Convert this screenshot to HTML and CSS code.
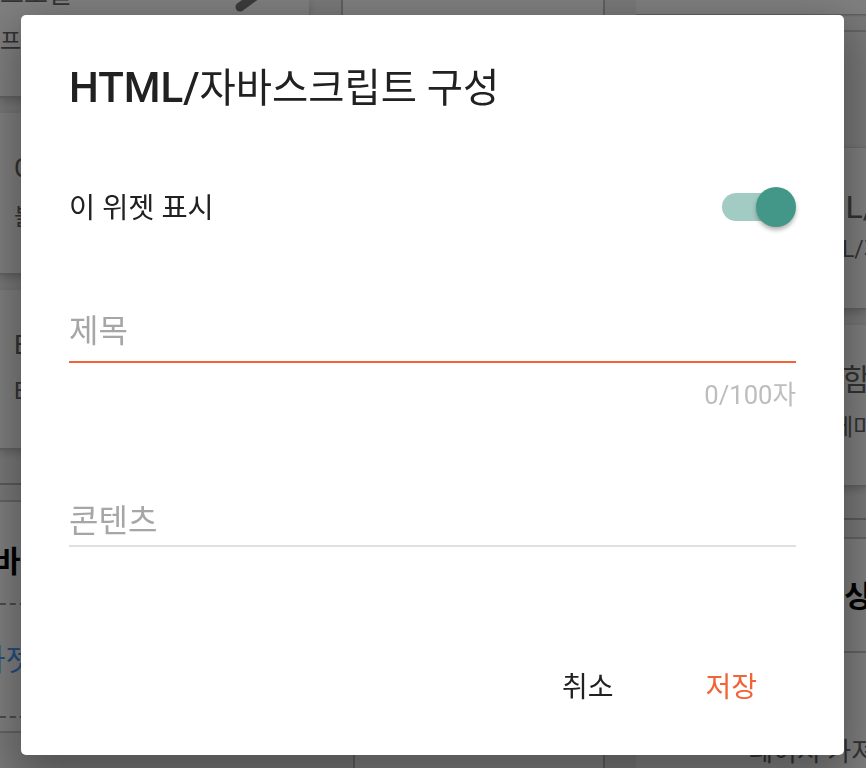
FILE: index.html
```html
<!DOCTYPE html>
<html lang="ko">
<head>
    <meta charset="UTF-8">
    <meta name="viewport" content="width=device-width, initial-scale=1.0">
    <title>HTML/자바스크립트 구성</title>
    <link rel="stylesheet" href="styles.css">
</head>
<body>

    <!-- 뒤쪽 레이아웃 화면 -->
    <div class="page">
        <div class="column column-left">
            <div class="card card-profile">
                <div class="card-top">
                    <span class="card-name">프로필</span>
                    <svg class="pencil" width="26" height="14" viewBox="0 0 26 14"><path d="M6 7 L24 -6" stroke="#777" stroke-width="9" stroke-linecap="round"/></svg>
                </div>
                <div class="card-sub">프로필</div>
            </div>
            <div class="card card-b">
                <div class="card-name">Chrome</div>
                <div class="card-sub">블로그</div>
            </div>
            <div class="card card-c">
                <div class="card-name">Embed</div>
                <div class="card-sub">Embed</div>
            </div>
            <div class="strip"></div>
            <div class="section">
                <div class="section-head">바닥글</div>
                <div class="section-link">가젯 추가</div>
            </div>
        </div>
        <div class="column column-mid">
            <div class="mid-top"></div>
            <div class="mid-bottom"></div>
        </div>
        <div class="column column-right">
            <div class="right-top"></div>
            <div class="card right-a">
                <div class="card-name">HTML/자바</div>
                <div class="card-sub">HTML/자바</div>
            </div>
            <div class="card right-b">
                <div class="card-name">포함</div>
                <div class="card-sub">테마</div>
            </div>
            <div class="strip"></div>
            <div class="section right-section">
                <div class="section-head">싱글</div>
            </div>
            <div class="right-bottom">페이지 가져오기</div>
        </div>
    </div>

    <!-- 구성 대화상자 -->
    <div class="overlay">
        <div class="dialog">
            <h2 class="dialog-title"><span class="title-latin">HTML/</span>자바스크립트 구성</h2>

            <div class="toggle-row">
                <span class="toggle-label">이 위젯 표시</span>
                <span class="switch"><span class="switch-knob"></span></span>
            </div>

            <div class="field field-active">
                <label class="field-label">제목</label>
            </div>
            <div class="counter">0/100자</div>

            <div class="field field-content">
                <label class="field-label">콘텐츠</label>
            </div>

            <div class="actions">
                <button class="btn">취소</button>
                <button class="btn btn-save">저장</button>
            </div>
        </div>
    </div>

</body>
</html>
```

FILE: styles.css
```css
* {
    box-sizing: border-box;
}

html, body {
    height: 100%;
}

body {
    margin: 0;
    overflow: hidden;
    font-family: Roboto, "Noto Sans CJK KR", sans-serif;
    color: #212121;
    background-color: #f2f2f2;
}

/* 뒤쪽 화면 */
.page {
    display: grid;
    grid-template-columns: 322px 252px 1fr;
    column-gap: 31px;
    height: 768px;
    overflow: hidden;
}

.column {
    min-width: 0;
}

.card {
    display: flow-root;
    background-color: #fff;
    border-bottom: 2px solid #c8c8c8;
    box-shadow: 0 3px 8px rgba(0, 0, 0, 0.18);
}

.card-top {
    display: flex;
    justify-content: space-between;
    align-items: flex-start;
}

.card-name {
    font-size: 26px;
    line-height: 34px;
    white-space: nowrap;
    color: #666;
}

.card-sub {
    font-size: 23px;
    line-height: 28px;
    white-space: nowrap;
    color: #666;
}

.card-profile {
    height: 98px;
    margin-right: 13px;
    padding-right: 49px;
    margin-bottom: 15px;
}

.card-profile .card-top {
    margin-top: -23px;
}

.card-profile .card-sub {
    margin-top: 14px;
}

.pencil {
    margin-top: 23px;
}

.card-b {
    height: 162px;
    padding: 38px 0 0 14px;
    margin-bottom: 15px;
}

.card-b .card-sub {
    margin-top: 19px;
}

.card-c .card-sub {
    margin-top: 16px;
}

.card-c {
    height: 160px;
    padding: 38px 0 0 14px;
}

.strip {
    height: 17px;
    margin-top: 33px;
    border-top: 2px solid #b8b8b8;
}

.section {
    height: 233px;
    background-color: #fff;
    border-top: 2px solid #c8c8c8;
    border-bottom: 2px solid #c8c8c8;
    padding-top: 42px;
}

.section-head {
    font-size: 30px;
    line-height: 36px;
    font-weight: 700;
    margin-left: -7px;
    color: #000;
    white-space: nowrap;
}

.section-link {
    margin-top: 23px;
    padding: 37px 0 38px;
    font-size: 30px;
    line-height: 36px;
    text-indent: -22px;
    color: #4a9ffa;
    white-space: nowrap;
    border-top: 2px dashed #999;
    border-bottom: 2px dashed #999;
}

.mid-top {
    height: 400px;
    margin-left: -12px;
    background-color: #fff;
    border-left: 2px solid #c0c0c0;
    border-right: 2px solid #c0c0c0;
}

.mid-bottom {
    height: 368px;
    background-color: #fff;
    border-left: 2px solid #c0c0c0;
    border-right: 2px solid #c0c0c0;
}

.right-top {
    height: 32px;
    border-bottom: 2px solid #c8c8c8;
    background: linear-gradient(#fff 14px, #b8b8b8 14px, #f2f2f2 17px);
}

.right-a {
    height: 163px;
    margin-top: 115px;
    margin-bottom: 15px;
    border-top: 1px solid #ddd;
    padding: 44px 0 0 140px;
}

.right-a .card-name {
    margin-top: -2px;
    font-size: 32px;
}

.right-a .card-sub {
    margin: 12px 0 0 16px;
}

.right-b {
    height: 162px;
    padding: 38px 0 0 179px;
}

.right-b .card-name {
    font-size: 30px;
}

.right-b .card-sub {
    margin: 17px 0 0 17px;
}

.column-right .strip {
    height: 19px;
    margin-top: 31px;
}

.right-section {
    height: 116px;
    padding-top: 40px;
    padding-left: 208px;
}

.right-section .section-head {
    margin-left: 0;
}

.right-bottom {
    background-color: #fff;
    height: 115px;
    padding: 81px 0 0 113px;
    font-size: 26px;
    line-height: 36px;
    white-space: nowrap;
    color: #666;
}

/* 대화상자 */
.overlay {
    position: fixed;
    top: 0;
    left: 0;
    right: 0;
    bottom: 0;
    padding: 15px 0 0 21px;
    background-color: rgba(0, 0, 0, 0.5);
}

.dialog {
    display: flex;
    flex-direction: column;
    width: 823px;
    height: 740px;
    padding: 49px 48px 47px;
    background-color: #fff;
    border-radius: 5px;
    box-shadow: 0 22px 40px 4px rgba(0, 0, 0, 0.2), 0 10px 50px 10px rgba(0, 0, 0, 0.16);
}

.dialog-title {
    height: 48px;
    margin: 0;
    font-size: 39.4px;
    line-height: 48px;
    font-weight: 400;
    color: #212121;
}

.title-latin {
    font-size: 42px;
    font-weight: 500;
}

.toggle-row {
    display: flex;
    justify-content: space-between;
    align-items: center;
    height: 40px;
    margin-top: 75px;
    font-size: 28.4px;
}

.toggle-label {
    margin-bottom: 4px;
}

.switch {
    position: relative;
    display: block;
    width: 68px;
    height: 28px;
    margin-right: 6px;
    border-radius: 14px;
    background-color: #a2cbc4;
}

.switch-knob {
    position: absolute;
    top: -6px;
    right: -6px;
    width: 40px;
    height: 40px;
    border-radius: 50%;
    background-color: #439788;
    box-shadow: 0 3px 4px rgba(0, 0, 0, 0.3);
}

.field {
    display: flex;
    align-items: center;
}

.field-label {
    font-size: 32px;
    line-height: 44px;
    color: #a6a6a6;
}

.field-active {
    margin-top: 82px;
    padding-bottom: 8px;
    border-bottom: 2px solid #f26437;
}

.counter {
    margin-top: 16px;
    font-size: 25.6px;
    line-height: 32px;
    text-align: right;
    color: #bdbdbd;
}

.field-content {
    margin-top: 88px;
    padding-bottom: 2px;
    border-bottom: 2px solid #e0e0e0;
}

.actions {
    display: flex;
    justify-content: flex-end;
    margin-top: auto;
    gap: 92px;
    padding-right: 39px;
}

.btn {
    padding: 0;
    border: none;
    background: none;
    font-family: inherit;
    font-size: 28px;
    line-height: 40px;
    color: #212121;
}

.btn-save {
    color: #f26437;
}
```
